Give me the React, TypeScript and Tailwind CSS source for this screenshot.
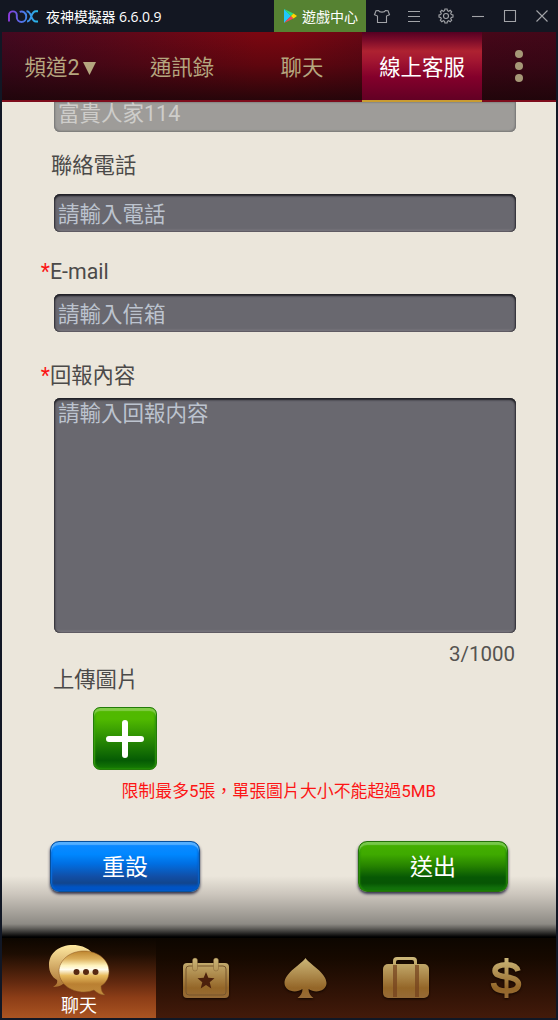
import type { ReactNode } from 'react';

function NoxLogo() {
  return (
    <svg className="ml-2 h-4 w-[31px] shrink-0" viewBox="0 0 31 16" fill="none" strokeWidth="1.9">
      <defs>
        <linearGradient id="nox" gradientUnits="userSpaceOnUse" x1="0" y1="0" x2="31" y2="0">
          <stop offset="0" stopColor="#9038dc" />
          <stop offset="0.5" stopColor="#4b78e8" />
          <stop offset="1" stopColor="#22c0e8" />
        </linearGradient>
      </defs>
      <g stroke="url(#nox)">
        <path d="M1 13.500V7.300a3.900 3.900 0 0 1 7.800 0v2a4.700 4.700 0 0 0 9.400 0V8.400a4.700 4.700 0 0 0-6.500-4.500" />
        <path d="M18.500 3.300c6 0 3.500 10.200 9.500 10.200h2M30 3.300h-2c-6 0-3.500 10.200-9 10.200" />
      </g>
    </svg>
  );
}

function TitleBar() {
  return (
    <div className="flex h-8 shrink-0 items-center bg-[#131722] text-[14px] text-white">
      <NoxLogo />
      <span className="ml-[7px] w-[228px] whitespace-nowrap font-['Open_Sans','Noto_Sans_CJK_TC',sans-serif] tracking-[-0.1px]">夜神模擬器 6.6.0.9</span>
      <div className="flex h-8 w-[92px] items-center bg-[#568232]">
        <svg className="ml-[10px] h-[14px] w-[13px]" viewBox="0 0 13 14">
          <path d="M0 0v14l7-7z" fill="#20c8fb" />
          <path d="M0 0l9.500 4.600L7 7z" fill="#27df80" />
          <path d="M0 14l9.500-4.600L7 7z" fill="#f24456" />
          <path d="M9.500 4.600L13 7 9.500 9.400 7 7z" fill="#ffd500" />
        </svg>
        <span className="ml-[5px] font-['Noto_Sans_CJK_TC',sans-serif]">遊戲中心</span>
      </div>
      <svg className="h-8 w-[192px]" viewBox="0 0 192 32" fill="none" stroke="#a2a4a8" strokeWidth="1.1">
        <path d="M12.500 10.500c.8 2.200 6.200 2.200 7 0l2.500.3 1.500 3.900-3 1.300v6.500h-9V16l-3-1.300 1.500-3.900z" />
        <path d="M42 11.500h12M42 16.500h12M42 21.500h12" />
        <path d="M78.600 10.700l.3-1.700h2.200l.3 1.700 1.300.6 1.500-1 1.500 1.600-1 1.400.6 1.300 1.700.3v2.200l-1.700.3-.6 1.300 1 1.500-1.500 1.500-1.500-1-1.300.6-.3 1.700h-2.200l-.3-1.700-1.300-.6-1.500 1-1.500-1.500 1-1.500-.6-1.300-1.700-.3v-2.200l1.700-.3.6-1.300-1-1.400 1.500-1.600 1.500 1z" />
        <circle cx="80" cy="16" r="2.500" />
        <path d="M106 16.500h12" />
        <path d="M138.500 10.500h11v11h-11z" />
        <path d="M170.500 10.500l11 11M181.500 10.500l-11 11" />
      </svg>
    </div>
  );
}

function Tab({ children }: { children: ReactNode }) {
  return <div className="flex w-[120px] items-center justify-center pt-[5px] text-[#b5a67f]">{children}</div>;
}

function Header() {
  return (
    <div className="flex h-[70px] shrink-0 border-b-2 border-[#7d0c1c] bg-[linear-gradient(to_bottom,transparent,rgba(20,4,8,0.28)_48%,rgba(28,5,9,0.88)),linear-gradient(to_right,#430920,#7c0711_46%,#7c0711_52%,#460719_88%,#430819)] text-[21.4px]">
      <Tab>
        <span className="-ml-[3px]">頻道2</span>
        <svg className="ml-[4px] h-[13px] w-[13px]" viewBox="0 0 13 13"><path d="M0 0h13L6.500 13z" fill="#b5a67f" /></svg>
      </Tab>
      <Tab>通訊錄</Tab>
      <Tab>聊天</Tab>
      <div className="-mb-[2px] flex w-[120px] items-center justify-center border-b-2 border-[#c89b32] bg-[linear-gradient(to_bottom,#550022,#7b0b29_12%,#ae2231_28%,#a31631_42%,#84002b_66%,#620024)] pt-[5px] text-white">線上客服</div>
      <div className="flex flex-1 flex-col items-center justify-center gap-1">
        <i className="size-2 rounded-full bg-[#a69877]" />
        <i className="size-2 rounded-full bg-[#a69877]" />
        <i className="size-2 rounded-full bg-[#a69877]" />
      </div>
    </div>
  );
}

function Label({ children, required }: { children: ReactNode; required?: boolean }) {
  return (
    <div className="flex h-8 shrink-0 items-center whitespace-nowrap pt-[2px] text-[21.3px] text-[#4b4a49]">
      <span className="flex w-[10px] justify-end text-[#fb1515]">{required && '*'}</span>
      {children}
    </div>
  );
}

function Field({ children, tall }: { children: ReactNode; tall?: boolean }) {
  return (
    <div className={`${tall ? 'h-[235px] items-start leading-[31px]' : 'h-[38px] items-center pt-[5px]'} ml-[14px] flex w-[462px] shrink-0 rounded-[6px] bg-[#69686f] pl-[4px] text-[21.5px] text-[#bcc3ce] shadow-[inset_0_2px_2px_#202026,inset_1px_0_2px_#35343a,inset_-1px_0_2px_#35343a,inset_0_-2px_2px_#858288]`}>
      {children}
    </div>
  );
}

function Form() {
  return (
    <div className="flex h-[836px] shrink-0 flex-col overflow-hidden bg-[linear-gradient(to_bottom,#ebe6db_0,#ebe6db_774px,#ccc6bd_792px,#8d8a84_822px,#65635f_826px,#000_835px)] pl-[38px]">
      <div className="ml-[14px] flex h-[30px] w-[462px] shrink-0 items-end rounded-b-[6px] bg-[#9e9c99] pb-[3px] pl-[4px] text-[21.5px] leading-[31px] text-[#cecdca] shadow-[inset_1px_0_2px_#777,inset_-1px_0_2px_#777,inset_0_-1px_2px_#878582]">富貴人家114</div>
      <div className="mt-[17px] pl-[1px]"><Label>聯絡電話</Label></div>
      <div className="mt-[13px]"><Field>請輸入電話</Field></div>
      <div className="mt-[23px]"><Label required>E-mail</Label></div>
      <div className="mt-[7px]"><Field>請輸入信箱</Field></div>
      <div className="mt-[27px]"><Label required>回報內容</Label></div>
      <div className="mt-[7px]"><Field tall>請輸入回報内容</Field></div>
      <div className="mt-[5px] flex h-[30px] w-[475px] items-center justify-end pt-[3px] text-[20.5px] text-[#555350]">3/1000</div>
      <div className="-mt-[5px] pl-[3px]"><Label>上傳圖片</Label></div>
      <div className="ml-[53px] mt-[12px] flex h-[63px] w-[64px] shrink-0 items-center justify-center rounded-[7px] border border-[#237b09] bg-[linear-gradient(to_bottom,#51b900,#50b900_18%,#298a04_52%,#055b04_86%,#167b05)] shadow-[inset_0_3px_1px_#82cc48,inset_1px_0_2px_#35a00b,inset_-1px_0_2px_#258c08]">
        <svg className="size-10" viewBox="0 0 40 40" stroke="white" strokeWidth="6" strokeLinecap="round"><path d="M20 4v32M4 20h32" /></svg>
      </div>
      <div className="mt-[8px] flex h-[25px] w-[396px] shrink-0 items-center justify-end whitespace-nowrap pt-[2px] text-[16.9px] text-[#fd1515]">限制最多5張，單張圖片大小不能超過5MB</div>
      <div className="ml-[10px] mt-[38px] flex w-[458px] justify-between text-[23px] text-white">
        <div className="flex h-[51px] w-[150px] items-center justify-center rounded-[9px] border border-[#07509d] bg-[linear-gradient(to_bottom,#118aff,#0087ff_25%,#006ee1_45%,#114fa7_70%,#11458d_84%,#0054c4_92%)] pt-[4px] shadow-[inset_0_3px_1px_#54afff,inset_1px_0_2px_#0069dd,inset_-1px_0_2px_#005ac3,0_2px_3px_#34334b]">重設</div>
        <div className="flex h-[51px] w-[150px] items-center justify-center rounded-[9px] border border-[#247109] bg-[linear-gradient(to_bottom,#44b000,#3faa00_25%,#278400_48%,#075804_72%,#075504_84%,#11700a_94%)] pt-[4px] shadow-[inset_0_3px_1px_#76c749,inset_1px_0_2px_#279204,inset_-1px_0_2px_#198004,0_2px_3px_#34334b]">送出</div>
      </div>
    </div>
  );
}

function BottomNav() {
  return (
    <div className="flex h-20 shrink-0 bg-[linear-gradient(to_bottom,#0c0600,#160900_25%,#431a0a)]">
      <div className="flex w-[154px] flex-col items-center bg-[linear-gradient(to_bottom,#0c0600,#1d0d02_16px,#62290f_44px,#8d3e17_60px,#aa5422)] pt-[7px] text-[18px] leading-[19px] text-white">
        <svg className="h-[51px] w-[62px]" viewBox="0 0 62 51">
          <defs>
            <linearGradient id="back" x2="0" y2="1"><stop stopColor="#ffe9a1" /><stop offset="1" stopColor="#a9702f" /></linearGradient>
            <linearGradient id="front" x2="0" y2="1"><stop stopColor="#bd852f" /><stop offset=".18" stopColor="#dcb05c" /><stop offset=".33" stopColor="#fff3bd" /><stop offset=".42" stopColor="#fffdf0" /><stop offset=".56" stopColor="#e7bb5d" /><stop offset=".75" stopColor="#ba8032" /><stop offset="1" stopColor="#c18b3d" /></linearGradient>
          </defs>
          <path d="M25 0C11 0 1 8 1 20c0 7 3 12 8 15 1 3-1 5-4 7 4 0 8-1 10-3 20 5 34-5 34-19C49 9 39 0 25 0z" fill="url(#back)" />
          <path d="M36 6C22 6 11 15 11 26.500S22 47 36 47c4 0 7-1 10-2 3 3 7 5 11 5-3-2-4-5-4-9 5-3 8-8 8-14.500C61 15 50 6 36 6z" fill="url(#front)" stroke="#885423" strokeWidth=".5" />
          <g fill="#572911"><circle cx="28.500" cy="27" r="3" /><circle cx="38" cy="27" r="3" /><circle cx="47.500" cy="27" r="3" /></g>
        </svg>
        <span>聊天</span>
      </div>
      <svg className="h-20 w-[400px]" viewBox="0 0 400 80">
        <defs>
          <linearGradient id="gold" gradientUnits="userSpaceOnUse" x1="0" y1="20" x2="0" y2="60"><stop stopColor="#ccb779" /><stop offset=".45" stopColor="#ab8749" /><stop offset=".75" stopColor="#946628" /><stop offset="1" stopColor="#976b37" /></linearGradient>
          <filter id="dark" x="-20%" y="-20%" width="140%" height="150%" colorInterpolationFilters="sRGB"><feDropShadow dx="0" dy="1" stdDeviation="1" floodColor="#100500" /></filter>
        </defs>
        <g fill="url(#gold)" filter="url(#dark)">
          <rect x="27" y="25" width="46" height="35" rx="4" />
          <rect x="30" y="28" width="40" height="29" rx="3" fill="none" stroke="#76552d" />
          <rect x="36.500" y="20" width="5" height="13" rx="2.500" stroke="#76552d" strokeWidth=".4" />
          <rect x="57.500" y="20" width="5" height="13" rx="2.500" stroke="#76552d" strokeWidth=".4" />
          <path d="M50 34l2.300 5.800 6.200.4-4.800 4 1.600 6.300-5.300-3.500-5.300 3.500 1.600-6.300-4.800-4 6.200-.4z" fill="#4c200c" />
          <path d="M149.500 20c4 6 21 15 21 25 0 8-11 11-18 6 0 4 2 7 5 9h-16c3-2 5-5 5-9-7 5-18 2-18-6 0-10 17-19 21-25z" />
          <path d="M237 27v-4q0-4 4-4h16q4 0 4 4v4h-3v-3q0-2-2-2h-14q-2 0-2 2v3z" />
          <rect x="227" y="26" width="46" height="34" rx="5" />
          <path d="M237 27h4v32h-4zM259 27h4v32h-4z" fill="#74401c" opacity=".7" />
          <path d="M362 33c-1-4-5-6.300-11.500-6.300-7 0-11.500 2.300-11.500 6 0 4.300 4.500 5.300 11.500 6.300s12 2.600 12 7.300c0 4.200-4.500 6.700-12 6.700-8 0-12.500-2.600-13-8" fill="none" stroke="url(#gold)" strokeWidth="5.500" />
          <path d="M348.500 20h4v40h-4z" />
        </g>
      </svg>
    </div>
  );
}

export default function App() {
  return (
    <main className="flex h-[1020px] w-[558px] flex-col overflow-hidden bg-[#111725] font-['Roboto','Noto_Sans_CJK_TC',sans-serif]" lang="zh-TW">
      <TitleBar />
      <div className="mx-[2px] flex flex-col">
        <Header />
        <Form />
        <BottomNav />
      </div>
    </main>
  );
}
